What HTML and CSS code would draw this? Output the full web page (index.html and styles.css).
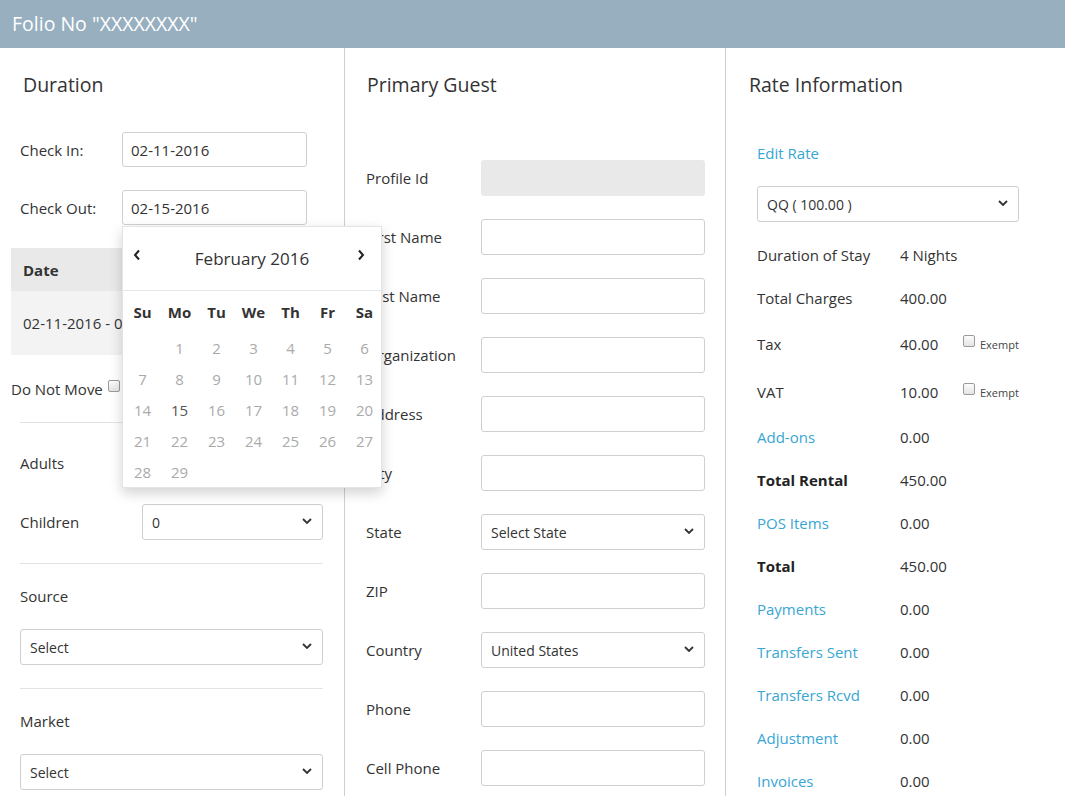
FILE: index.html
```html
<!DOCTYPE html>
<html lang="en">
<head>
<meta charset="utf-8">
<title>Folio</title>
<link rel="stylesheet" href="styles.css">
</head>
<body>
<header class="topbar"><h1 class="topbar-title">Folio No "XXXXXXXX"</h1></header>
<main class="cols">
  <section class="col col-duration">
    <h2 class="col-title">Duration</h2>
    <div class="col-body duration-body">
      <div class="field-row indent">
        <span class="label w102">Check In:</span>
        <div class="control date-ctl">02-11-2016</div>
      </div>
      <div class="field-row indent">
        <span class="label w102">Check Out:</span>
        <div class="date-wrap">
          <div class="control date-ctl">02-15-2016</div>
          <div class="datepicker">
            <div class="dp-head">
              <span class="dp-nav dp-prev"><svg width="8" height="12" viewBox="0 0 8 12"><path d="M6 1.5L2 6l4 4.5" fill="none" stroke="#222" stroke-width="2"/></svg></span>
              <span class="dp-title">February 2016</span>
              <span class="dp-nav dp-next"><svg width="8" height="12" viewBox="0 0 8 12"><path d="M2 1.5L6 6l-4 4.5" fill="none" stroke="#222" stroke-width="2"/></svg></span>
            </div>
            <div class="dp-dow">
              <span class="dow">Su</span><span class="dow">Mo</span><span class="dow">Tu</span><span class="dow">We</span><span class="dow">Th</span><span class="dow">Fr</span><span class="dow">Sa</span>
            </div>
            <div class="dp-days">
              <span class="day"></span><span class="day">1</span><span class="day">2</span><span class="day">3</span><span class="day">4</span><span class="day">5</span><span class="day">6</span>
              <span class="day">7</span><span class="day">8</span><span class="day">9</span><span class="day">10</span><span class="day">11</span><span class="day">12</span><span class="day">13</span>
              <span class="day">14</span><span class="day active">15</span><span class="day">16</span><span class="day">17</span><span class="day">18</span><span class="day">19</span><span class="day">20</span>
              <span class="day">21</span><span class="day">22</span><span class="day">23</span><span class="day">24</span><span class="day">25</span><span class="day">26</span><span class="day">27</span>
              <span class="day">28</span><span class="day">29</span>
            </div>
          </div>
        </div>
      </div>
      <div class="rooms-table">
        <div class="rt-head">Date</div>
        <div class="rt-row">02-11-2016 - 02-15-2016</div>
      </div>
      <div class="dnm-row">Do Not Move<span class="cb dnm-cb"></span></div>
      <hr class="sep indent">
      <div class="field-row indent">
        <span class="label w122">Adults</span>
        <div class="control select grow">1<span class="chev"><svg width="10" height="6" viewBox="0 0 10 6"><path d="M1 1l4 4 4-4" fill="none" stroke="#333" stroke-width="1.8"/></svg></span></div>
      </div>
      <div class="field-row indent">
        <span class="label w122">Children</span>
        <div class="control select grow">0<span class="chev"><svg width="10" height="6" viewBox="0 0 10 6"><path d="M1 1l4 4 4-4" fill="none" stroke="#333" stroke-width="1.8"/></svg></span></div>
      </div>
      <hr class="sep indent">
      <div class="label-line indent">Source</div>
      <div class="control select indent">Select<span class="chev"><svg width="10" height="6" viewBox="0 0 10 6"><path d="M1 1l4 4 4-4" fill="none" stroke="#333" stroke-width="1.8"/></svg></span></div>
      <hr class="sep indent">
      <div class="label-line indent">Market</div>
      <div class="control select indent">Select<span class="chev"><svg width="10" height="6" viewBox="0 0 10 6"><path d="M1 1l4 4 4-4" fill="none" stroke="#333" stroke-width="1.8"/></svg></span></div>
    </div>
  </section>

  <section class="col col-guest">
    <h2 class="col-title">Primary Guest</h2>
    <div class="col-body guest-body">
      <div class="g-row"><span class="label w115">Profile Id</span><div class="control g-ctl disabled"></div></div>
      <div class="g-row"><span class="label w115">First Name</span><div class="control g-ctl"></div></div>
      <div class="g-row"><span class="label w115">Last Name</span><div class="control g-ctl"></div></div>
      <div class="g-row"><span class="label w115">Organization</span><div class="control g-ctl"></div></div>
      <div class="g-row"><span class="label w115">Address</span><div class="control g-ctl"></div></div>
      <div class="g-row"><span class="label w115">City</span><div class="control g-ctl"></div></div>
      <div class="g-row"><span class="label w115">State</span><div class="control g-ctl select">Select State<span class="chev"><svg width="10" height="6" viewBox="0 0 10 6"><path d="M1 1l4 4 4-4" fill="none" stroke="#333" stroke-width="1.8"/></svg></span></div></div>
      <div class="g-row"><span class="label w115">ZIP</span><div class="control g-ctl"></div></div>
      <div class="g-row"><span class="label w115">Country</span><div class="control g-ctl select">United States<span class="chev"><svg width="10" height="6" viewBox="0 0 10 6"><path d="M1 1l4 4 4-4" fill="none" stroke="#333" stroke-width="1.8"/></svg></span></div></div>
      <div class="g-row"><span class="label w115">Phone</span><div class="control g-ctl"></div></div>
      <div class="g-row"><span class="label w115">Cell Phone</span><div class="control g-ctl"></div></div>
    </div>
  </section>

  <section class="col col-rate">
    <h2 class="col-title">Rate Information</h2>
    <div class="col-body rate-body">
      <a class="link edit-rate">Edit Rate</a>
      <div class="control select rate-select">QQ ( 100.00 )<span class="chev"><svg width="10" height="6" viewBox="0 0 10 6"><path d="M1 1l4 4 4-4" fill="none" stroke="#333" stroke-width="1.8"/></svg></span></div>
      <div class="rate-list">
        <div class="r-row"><span class="r-label">Duration of Stay</span><span class="r-val">4 Nights</span></div>
        <div class="r-row"><span class="r-label">Total Charges</span><span class="r-val">400.00</span></div>
        <div class="r-row tax"><span class="r-label">Tax</span><span class="r-val narrow">40.00</span><span class="cb exempt-cb"></span><span class="exempt">Exempt</span></div>
        <div class="r-row tax"><span class="r-label">VAT</span><span class="r-val narrow">10.00</span><span class="cb exempt-cb"></span><span class="exempt">Exempt</span></div>
        <div class="r-row"><a class="r-label link">Add-ons</a><span class="r-val">0.00</span></div>
        <div class="r-row"><span class="r-label bold">Total Rental</span><span class="r-val">450.00</span></div>
        <div class="r-row"><a class="r-label link">POS Items</a><span class="r-val">0.00</span></div>
        <div class="r-row"><span class="r-label bold">Total</span><span class="r-val">450.00</span></div>
        <div class="r-row"><a class="r-label link">Payments</a><span class="r-val">0.00</span></div>
        <div class="r-row"><a class="r-label link">Transfers Sent</a><span class="r-val">0.00</span></div>
        <div class="r-row"><a class="r-label link">Transfers Rcvd</a><span class="r-val">0.00</span></div>
        <div class="r-row"><a class="r-label link">Adjustment</a><span class="r-val">0.00</span></div>
        <div class="r-row"><a class="r-label link">Invoices</a><span class="r-val">0.00</span></div>
      </div>
    </div>
  </section>
</main>
</body>
</html>
```

FILE: styles.css
```css
* { box-sizing: border-box; }
html, body { margin: 0; padding: 0; height: 100%; overflow: hidden; }
body {
  font-family: "Open Sans", "Liberation Sans", sans-serif;
  font-size: 15px;
  color: #333;
  background: #fff;
}

.topbar {
  height: 48px;
  background: #98afc0;
  display: flex;
  align-items: center;
  padding-left: 12px;
}
.topbar-title {
  margin: 0;
  font-size: 19.5px;
  font-weight: 400;
  color: #fff;
  line-height: 28px;
}

.cols {
  display: flex;
  height: 748px;
  overflow: hidden;
}
.col { flex: none; }
.col-duration { width: 345px; border-right: 1px solid #cfcfcf; }
.col-guest { width: 381px; border-right: 1px solid #cfcfcf; }
.col-rate { flex: 1; }

.col-title {
  margin: 23px 0 0 0;
  padding-left: 23px;
  font-size: 19.5px;
  font-weight: 400;
  line-height: 28px;
  color: #333;
}
.col-guest .col-title { padding-left: 22px; }

.label { flex: none; line-height: 20px; }
.w102 { width: 102px; }
.w115 { width: 115px; }
.w122 { width: 122px; }

.control {
  position: relative;
  height: 36px;
  border: 1px solid #cfcfcf;
  border-radius: 3px;
  background: #fff;
  padding: 0 30px 0 8px;
  display: flex;
  align-items: center;
  font-size: 15px;
  color: #333;
}
.select { font-size: 14px; padding-left: 9px; }
.chev {
  position: absolute;
  right: 10px;
  top: 50%;
  margin-top: -4px;
  display: flex;
}

/* Duration column */
.duration-body {
  margin-top: 33px;
  padding: 0 11px;
  display: flex;
  flex-direction: column;
  gap: 23px;
}
.indent { margin-left: 9px; margin-right: 10px; }
.field-row { display: flex; align-items: center; }
.date-ctl { width: 185px; height: 35px; }
.date-wrap { position: relative; }
.grow { flex: 1; }

.rooms-table { display: flex; flex-direction: column; }
.rt-head {
  height: 43px;
  background: #e9e9e9;
  font-weight: 700;
  padding-left: 12px;
  display: flex;
  align-items: center;
}
.rt-row {
  height: 64px;
  background: #f3f3f3;
  padding-left: 12px;
  display: flex;
  align-items: center;
  white-space: nowrap;
}
.dnm-row {
  display: flex;
  align-items: center;
  line-height: 20px;
  margin-top: 1px;
}
.cb {
  display: inline-block;
  width: 12px;
  height: 12px;
  border: 1px solid #9a9a9a;
  border-radius: 2px;
  background: linear-gradient(#fdfdfd, #e4e4e4);
  margin-left: 2px;
  margin-top: -6px;
}
.dnm-cb { margin-left: 5px; }
.sep {
  border: 0;
  border-top: 1px solid #e3e3e3;
  margin-top: 0;
  margin-bottom: -1px;
  height: 0;
}
.label-line { line-height: 20px; }

/* Datepicker */
.datepicker {
  position: absolute;
  left: 0;
  top: 36px;
  width: 260px;
  height: 262px;
  background: #fff;
  border: 1px solid #e4e4e4;
  box-shadow: 0 5px 12px rgba(0, 0, 0, 0.18);
  z-index: 10;
}
.dp-head {
  position: relative;
  height: 64px;
  border-bottom: 1px solid #e6e6e6;
  display: flex;
  align-items: center;
  justify-content: center;
}
.dp-title {
  font-size: 17px;
  color: #333;
}
.dp-nav { position: absolute; top: 22px; display: flex; }
.dp-prev { left: 10px; }
.dp-next { right: 16px; }
.dp-dow, .dp-days {
  display: grid;
  grid-template-columns: repeat(7, 37px);
  grid-auto-rows: 31px;
  padding-left: 1px;
}
.dp-dow { margin-top: 5px; margin-bottom: 5px; }
.dow {
  font-weight: 700;
  color: #333;
  display: flex;
  align-items: center;
  justify-content: center;
}
.day {
  color: #aaa;
  display: flex;
  align-items: center;
  justify-content: center;
}
.day.active { color: #555; }

/* Guest column */
.guest-body {
  margin-top: 61px;
  padding-left: 21px;
  display: flex;
  flex-direction: column;
  gap: 23px;
}
.g-row { display: flex; align-items: center; }
.g-ctl { width: 224px; }
.g-ctl.disabled { background: #e9e9e9; border-color: #e9e9e9; }

/* Rate column */
.rate-body {
  padding-left: 31px;
  display: flex;
  flex-direction: column;
  align-items: flex-start;
}
.link { color: #38a6d3; text-decoration: none; cursor: pointer; }
.edit-rate { margin-top: 44px; line-height: 20px; }
.rate-select { margin-top: 23px; width: 262px; }
.rate-list {
  margin-top: 23px;
  display: flex;
  flex-direction: column;
  gap: 23px;
}
.r-row {
  display: flex;
  align-items: center;
  height: 20px;
  line-height: 20px;
}
.r-row.tax { height: 25px; }
.r-label { width: 143px; flex: none; }
.r-val { flex: none; }
.r-val.narrow { width: 63px; }
.bold { font-weight: 700; color: #222; }
.exempt-cb { margin-left: 0; margin-top: -6px; }
.exempt { font-size: 11px; color: #444; margin-left: 5px; margin-top: 2px; }
```
